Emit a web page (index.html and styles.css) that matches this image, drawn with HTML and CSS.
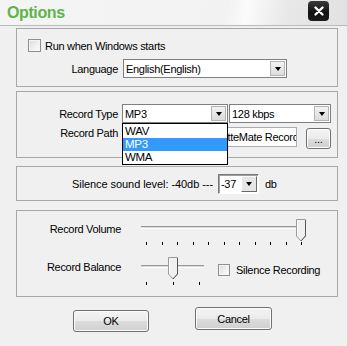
FILE: index.html
```html
<!DOCTYPE html>
<html>
<head>
<meta charset="utf-8">
<link rel="stylesheet" href="styles.css">
</head>
<body>
<div class="win">
  <div class="titlebar">
    <span class="title">Options</span>
    <div class="close"><svg width="10" height="10" viewBox="0 0 10 10"><path d="M1.5 1.5 L8.5 8.5 M8.5 1.5 L1.5 8.5" stroke="#fff" stroke-width="2.4" stroke-linecap="round"/></svg></div>
  </div>
  <div class="content">
    <div class="group g1">
      <div class="chkrow"><span class="chk"></span><span>Run when Windows starts</span></div>
      <div class="field">
        <span class="lbl">Language</span>
        <div class="select w-lang"><span class="val">English(English)</span><span class="arrow"></span></div>
      </div>
    </div>

    <div class="group g2">
      <div class="field">
        <span class="lbl">Record Type</span>
        <div class="select w-type"><span class="val">MP3</span><span class="arrow"></span></div>
        <div class="select w-rate"><span class="val">128 kbps</span><span class="arrow"></span></div>
      </div>
      <div class="field path">
        <span class="lbl">Record Path</span>
        <div class="input w-path"><span class="ptext">My Music\CassetteMate Recordings</span></div>
        <div class="btn small">...</div>
      </div>
      <div class="droplist">
        <div class="opt">WAV</div>
        <div class="opt sel">MP3</div>
        <div class="opt">WMA</div>
      </div>
    </div>

    <div class="group g3">
      <span class="slev">Silence sound level: -40db ---</span>
      <div class="spin"><span class="val">-37</span><span class="arrow raised"></span></div>
      <span class="unit">db</span>
    </div>

    <div class="group g4">
      <div class="srow">
        <span class="slbl">Record Volume</span>
        <div class="slider s-vol">
          <div class="track"></div>
          <div class="ticks"><i></i><i></i><i></i><i></i><i></i><i></i><i></i><i></i><i></i><i></i><i></i></div>
          <svg class="thumb" style="left:155px" width="10" height="23" viewBox="0 0 10 23"><path d="M0.5 0.5 H9.5 V17 L5 22 L0.5 17 Z" fill="#f0f0f0" stroke="#9a9a9a"/><path d="M1.5 1.5 V16.5" stroke="#fff"/><path d="M9.5 1 V17 L5 22" stroke="#555" fill="none"/></svg>
        </div>
      </div>
      <div class="srow r2">
        <span class="slbl">Record Balance</span>
        <div class="slider s-bal">
          <div class="track"></div>
          <div class="ticks"><i></i><i></i><i></i></div>
          <svg class="thumb" style="left:27px" width="10" height="23" viewBox="0 0 10 23"><path d="M0.5 0.5 H9.5 V17 L5 22 L0.5 17 Z" fill="#f0f0f0" stroke="#9a9a9a"/><path d="M1.5 1.5 V16.5" stroke="#fff"/><path d="M9.5 1 V17 L5 22" stroke="#555" fill="none"/></svg>
        </div>
        <div class="chkrow silence"><span class="chk"></span><span>Silence Recording</span></div>
      </div>
    </div>

    <div class="buttons">
      <div class="btn ok">OK</div>
      <div class="btn cancel">Cancel</div>
    </div>
  </div>
</div>
</body>
</html>
```

FILE: styles.css
```css
* { box-sizing: border-box; }
html, body { margin: 0; padding: 0; }
body {
  background: #f0f0f0;
  font-family: "Liberation Sans", Arial, sans-serif;
  font-size: 11px;
  letter-spacing: -0.3px;
  color: #000;
}
.win {
  width: 347px;
  height: 346px;
  background: #f0f0f0;
  overflow: hidden;
}
.titlebar {
  height: 26px;
  border-bottom: 1px solid #b9b9b9;
  background: linear-gradient(100deg, #f4f4f4 0, #f2f2f2 225px, #fbfbfb 245px, #e8e8e8 285px, #e2e2e2 100%);
  display: flex;
  align-items: flex-start;
  justify-content: space-between;
  padding: 0 18px 0 7px;
}
.title {
  font-size: 16px;
  font-weight: bold;
  color: #5db44a;
  letter-spacing: -0.4px;
  line-height: 18px;
  margin-top: 4px;
}
.close {
  width: 21px;
  height: 20px;
  margin-top: 1px;
  border-radius: 4px;
  background: linear-gradient(#3a3a3a, #111 60%, #1c1c1c);
  display: flex;
  align-items: center;
  justify-content: center;
}
.content {
  padding: 2px 9px 0 16px;
}
.group {
  border: 1px solid #a8a8a8;
  width: 322px;
  position: relative;
}
.g1 { height: 59px; padding-top: 10px; }
.g2 { height: 67px; margin-top: 4px; padding-top: 12px; }
.g3 { height: 35px; margin-top: 8px; padding: 0 0 0 55px; display: flex; align-items: center; }
.g4 { height: 87px; margin-top: 9px; padding-top: 8px; }
.slev { letter-spacing: -0.07px; color: #000; }
.unit { color: #000; }

.chkrow { display: flex; align-items: center; height: 13px; margin-left: 11px; }
.chk {
  width: 13px;
  height: 13px;
  border: 1px solid #8e8f8f;
  background: linear-gradient(135deg, #dcdcdc, #fff);
  box-shadow: inset 0 0 0 1px #f4f4f4;
  margin-right: 4px;
  flex: none;
}
.field { display: flex; align-items: center; }
.g1 .field { margin-top: 7px; }
.lbl { width: 101px; text-align: right; margin-right: 5px; flex: none; }
.g2 .lbl { margin-right: 4px; }
.select {
  height: 19px;
  border: 1px solid #7f7f7f;
  background: #fff;
  display: flex;
  align-items: center;
  justify-content: space-between;
  padding-left: 2px;
}
.w-lang { width: 164px; }
.w-type { width: 106px; }
.w-rate { width: 102px; margin-left: 1px; }
.arrow {
  width: 15px;
  height: 15px;
  margin-right: 1px;
  border: 1px solid #b4b4b4;
  background: linear-gradient(#f2f2f2, #dcdcdc);
  display: flex;
  align-items: center;
  justify-content: center;
}
.arrow::after {
  content: "";
  border-left: 3.5px solid transparent;
  border-right: 3.5px solid transparent;
  border-top: 4px solid #000;
}
.path { margin-top: 4px; align-items: flex-start; }
.input {
  width: 175px;
  height: 20px;
  border: 1px solid #abadb3;
  background: #fff;
  overflow: hidden;
  white-space: nowrap;
  line-height: 18px;
  padding-left: 28px;
}
.btn {
  border: 1px solid #707070;
  border-radius: 3px;
  background: linear-gradient(#f4f4f4 0, #ebebeb 50%, #dddddd 51%, #cfcfcf 100%);
  box-shadow: inset 0 0 0 1px #fcfcfc;
  display: flex;
  align-items: center;
  justify-content: center;
}
.btn.small { width: 25px; height: 21px; margin-left: 9px; margin-top: 1px; }
.droplist {
  position: absolute;
  left: 105px;
  top: 31px;
  width: 106px;
  height: 42px;
  border: 1px solid #000;
  background: #fff;
  padding-top: 1px;
}
.opt { height: 13px; line-height: 13px; padding-left: 2px; font-size: 11.5px; }
.opt.sel { background: #3399ff; color: #fff; }

.spin {
  width: 41px;
  height: 20px;
  margin: 0 6px 0 5px;
  border: 1px solid;
  border-color: #7a7a7a #fff #fff #7a7a7a;
  box-shadow: inset 1px 1px 0 #a0a0a0;
  background: #fff;
  display: flex;
  align-items: center;
  justify-content: space-between;
  padding-left: 2px;
}
.arrow.raised {
  width: 16px;
  height: 16px;
  border-color: #fff #6a6a6a #6a6a6a #fff;
  background: #e6e6e6;
}

.srow { display: flex; align-items: flex-start; height: 27px; }
.srow.r2 { margin-top: 11px; }
.slbl { width: 104px; text-align: right; margin-top: 4px; margin-right: 20px; line-height: 13px; }
.slider { position: relative; height: 28px; }
.s-vol { width: 165px; }
.s-bal { width: 63px; }
.track {
  position: absolute;
  left: 0; right: 2px;
  top: 7px;
  height: 3px;
  border-top: 1px solid #9a9a9a;
  border-bottom: 1px solid #fff;
  background: #d8d8d8;
}
.s-bal .track { top: 8px; right: 0; }
.ticks {
  position: absolute;
  left: 5px;
  top: 23px;
  display: flex;
  justify-content: space-between;
}
.s-vol .ticks { width: 156px; }
.s-bal .ticks { width: 54px; top: 25px; }
.ticks i { display: block; width: 1px; height: 3px; background: #000; }
.thumb { position: absolute; top: 0; }
.silence { margin-left: 14px; margin-top: 6px; }
.silence .chk { width: 12px; height: 12px; margin-right: 6px; }

.buttons {
  display: flex;
  align-items: flex-start;
  padding-left: 57px;
  margin-top: 10px;
}
.btn.ok { width: 76px; height: 22px; margin-top: 3px; }
.btn.cancel { width: 77px; height: 23px; margin-left: 46px; }
```
